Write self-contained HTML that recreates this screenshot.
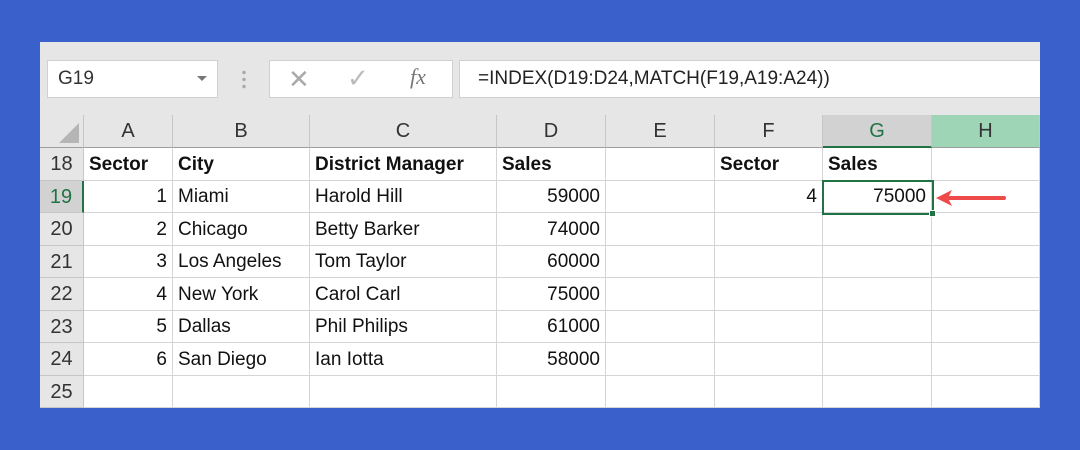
<!DOCTYPE html><html><head><style>
body{margin:0;width:1080px;height:450px;background:#3a60cc;position:relative;overflow:hidden;font-family:"Liberation Sans",sans-serif}
#p{position:absolute;left:40px;top:42px;width:1000px;height:366px;background:#e6e6e6}
.a{position:absolute;box-sizing:border-box}
.c{position:absolute;box-sizing:border-box;border-right:1px solid #d4d4d4;border-bottom:1px solid #d4d4d4;background:#fff;font-size:19px;color:#111;padding:0 5px;white-space:nowrap;overflow:hidden}
.h{position:absolute;box-sizing:border-box;border-right:1px solid #c6c6c6;border-bottom:1px solid #9e9e9e;background:#e6e6e6;font-size:20px;color:#333;text-align:center;line-height:32px}
.r{text-align:right}.b{font-weight:bold}
</style></head><body><div id="p"></div>
<div class="a" style="left:47px;top:60px;width:171px;height:38px;background:#fff;border:1px solid #d0d0d0;font-size:19px;line-height:36px;padding-left:10px;color:#333">G19</div>
<div class="a" style="left:197px;top:76px;width:0;height:0;border-left:5px solid transparent;border-right:5px solid transparent;border-top:5px solid #777"></div>
<div class="a" style="left:242px;top:69px;width:4px;height:20px;background:radial-gradient(circle,#aaa 1.5px,transparent 2px) 0 0/4px 7px"></div>
<div class="a" style="left:269px;top:60px;width:184px;height:38px;background:#fff;border:1px solid #d0d0d0"></div>
<div class="a" style="left:288px;top:64px;font-size:26px;color:#aaa">✕</div>
<div class="a" style="left:347px;top:63px;font-size:26px;color:#bbb">✓</div>
<div class="a" style="left:410px;top:64px;font-size:22px;color:#777;font-family:'Liberation Serif',serif;font-style:italic">fx</div>
<div class="a" style="left:459px;top:60px;width:581px;height:38px;background:#fff;border:1px solid #d0d0d0;border-right:none;font-size:19px;line-height:36px;padding-left:18px;color:#222">=INDEX(D19:D24,MATCH(F19,A19:A24))</div>
<div id="g"></div>
<script>
const cols=[40,84,173,310,497,606,715,823,932,1040];
const L=["","A","B","C","D","E","F","G","H"];
let s="";
const top0=115,hh=33;
const ys=[148,181,213,246,278,311,343,376,408];
s+=`<div class="h" style="left:40px;top:${top0}px;width:44px;height:${hh}px"><div style="position:absolute;right:4px;bottom:4px;width:0;height:0;border-left:20px solid transparent;border-bottom:20px solid #b5b5b5"></div></div>`;
for(let i=1;i<9;i++){let st=i==7?"background:#d2d2d2;border-bottom:2px solid #217346;color:#217346":i==8?"background:#9fd5b7":"";
s+=`<div class="h" style="left:${cols[i]}px;top:${top0}px;width:${cols[i+1]-cols[i]}px;height:${hh}px;${st}">${L[i]}</div>`;}
const data=[["Sector","City","District Manager","Sales","","Sector","Sales",""],
["1","Miami","Harold Hill","59000","","4","75000",""],
["2","Chicago","Betty Barker","74000"],["3","Los Angeles","Tom Taylor","60000"],
["4","New York","Carol Carl","75000"],["5","Dallas","Phil Philips","61000"],
["6","San Diego","Ian Iotta","58000"],[]];
for(let r=0;r<8;r++){let y=ys[r],h=ys[r+1]-ys[r];
let st=r==1?"background:#d2d2d2;color:#217346;border-right:2px solid #217346":"";
s+=`<div class="h" style="left:40px;top:${y}px;width:44px;height:${h}px;border-bottom-color:#c6c6c6;line-height:${h}px;${st}">${18+r}</div>`;
for(let i=1;i<9;i++){let v=data[r][i-1]||"";let cl="c";
if(r==0)cl+=" b";else if([1,4,6,7].includes(i))cl+=" r";
s+=`<div class="${cl}" style="left:${cols[i]}px;top:${y}px;width:${cols[i+1]-cols[i]}px;height:${h}px;line-height:${h}px">${v}</div>`;}}
s+=`<div class="a" style="left:822px;top:180px;width:112px;height:35px;border:2px solid #217346"></div>`;
s+=`<div class="a" style="left:929px;top:210px;width:7px;height:7px;background:#217346;border:1px solid #fff"></div>`;
s+=`<svg class="a" style="left:932px;top:188px" width="80" height="20"><line x1="14" y1="10" x2="72" y2="10" stroke="#ee4a4a" stroke-width="4" stroke-linecap="round"/><path d="M4 10 L20 2 L16 10 L20 18Z" fill="#ee4a4a"/></svg>`;
document.getElementById("g").innerHTML=s;
</script></body></html>
